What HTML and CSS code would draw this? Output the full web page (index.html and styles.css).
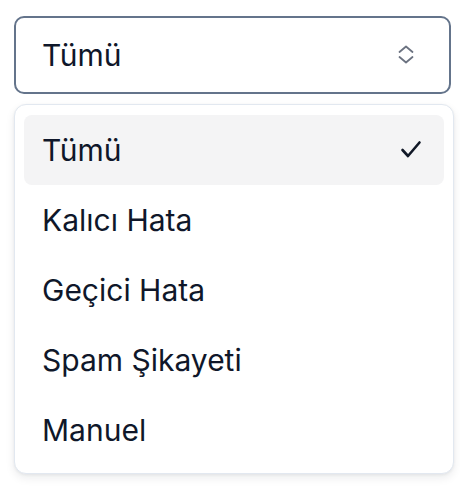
FILE: index.html
```html
<!DOCTYPE html>
<html lang="tr">
<head>
<meta charset="utf-8">
<link rel="stylesheet" href="styles.css">
</head>
<body>
<div class="select">
  <button class="trigger" type="button">
    <span class="value">Tümü</span>
    <svg class="sort-icon" width="16" height="20" viewBox="0 0 16 20" aria-hidden="true">
      <polyline points="1.5,7 8,1.5 14.5,7" />
      <polyline points="1.5,12 8,17.5 14.5,12" />
    </svg>
  </button>
  <ul class="menu">
    <li class="item selected">
      <span>Tümü</span>
      <svg class="check" width="22" height="20" viewBox="0 0 22 20" aria-hidden="true">
        <polyline points="2.5,10 8,16 19.5,2.5" />
      </svg>
    </li>
    <li class="item"><span>Kalıcı Hata</span></li>
    <li class="item"><span>Geçici Hata</span></li>
    <li class="item"><span>Spam Şikayeti</span></li>
    <li class="item"><span>Manuel</span></li>
  </ul>
</div>
</body>
</html>
```
FILE: styles.css
```css
* { box-sizing: border-box; }
html, body { margin: 0; background: #ffffff; }
body {
  padding: 16px 14px;
  font-family: Inter, "Noto Sans", sans-serif;
  color: #0f172a;
}
.select { display: flex; flex-direction: column; }
.trigger {
  width: 437px;
  height: 78px;
  border: 2px solid #64748b;
  border-radius: 10px;
  background: #fff;
  display: flex;
  align-items: center;
  justify-content: space-between;
  padding: 0 35px 0 26px;
  font: inherit;
  font-size: 30px;
  color: #0f172a;
}
.sort-icon {
  fill: none;
  stroke: #6b7280;
  stroke-width: 1.8;
  stroke-linecap: round;
  stroke-linejoin: round;
}
.menu {
  list-style: none;
  margin: 10px 0 0;
  width: 440px;
  border: 1px solid #e2e8f0;
  border-radius: 12px;
  padding: 10px 9px 8px;
  background: #fff;
  box-shadow: 0 4px 10px rgba(15, 23, 42, 0.08), 0 1px 3px rgba(15, 23, 42, 0.06);
}
.item {
  height: 70px;
  display: flex;
  align-items: center;
  justify-content: space-between;
  padding: 0 22px 0 18px;
  font-size: 30px;
  border-radius: 8px;
  color: #0f172a;
}
.item.selected { background: #f4f4f5; }
.check {
  fill: none;
  stroke: #111827;
  stroke-width: 2.6;
  stroke-linecap: round;
  stroke-linejoin: round;
}
```
